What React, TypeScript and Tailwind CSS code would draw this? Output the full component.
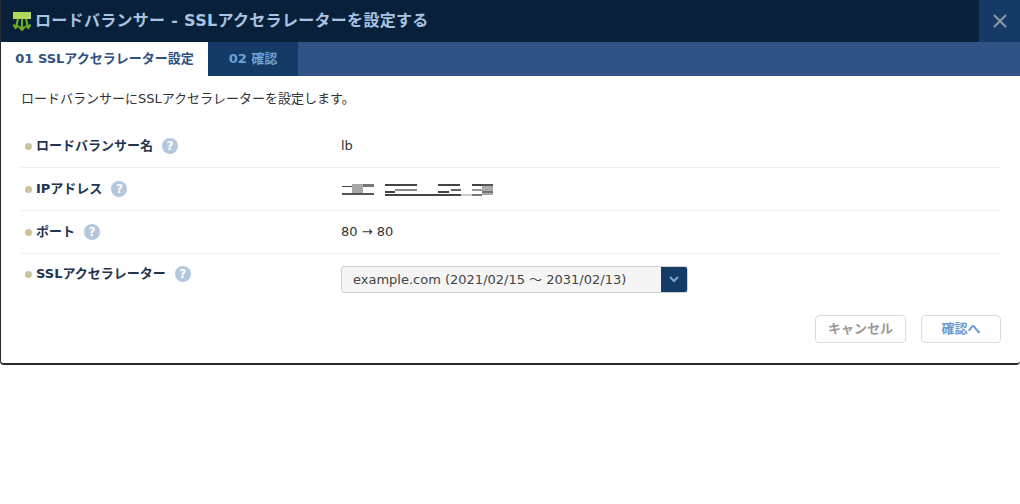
const fontStack = '"DejaVu Sans", "Noto Sans CJK JP", sans-serif';

function HelpIcon() {
  return (
    <span className="ml-[9px] flex h-[16px] w-[16px] items-center justify-center rounded-full bg-[#b4c7dd] text-[12px] font-bold leading-none text-white">
      ?
    </span>
  );
}

function LoadBalancerIcon() {
  return (
    <svg width="20" height="22" viewBox="0 0 20 22" className="mr-[3px]">
      <rect x="1" y="2" width="18" height="7" fill="#b3d65c" />
      <g stroke="#6fae1e" strokeWidth="2" fill="none">
        <path d="M6 9L4 17" />
        <path d="M1.500 14.500L3.500 18l3-2.500" />
        <path d="M10 9v11" />
        <path d="M7 16.500l3 3.500 3-3.500" />
        <path d="M14 9l2 8" />
        <path d="M13.500 15.500l3 2.500 2-3.500" />
      </g>
    </svg>
  );
}

function MaskedAddress() {
  return (
    <svg width="156" height="15" viewBox="0 0 156 15" className="block">
      <rect x="1" y="4" width="10" height="1" fill="#444" />
      <rect x="11" y="2" width="11" height="11" fill="#a8a8a8" />
      <rect x="22" y="2" width="11" height="3" fill="#777" />
      <rect x="1" y="11" width="32" height="2" fill="#555" />
      <rect x="44" y="2" width="32" height="2" fill="#444" />
      <rect x="54" y="7" width="22" height="2" fill="#888" />
      <rect x="44" y="9" width="10" height="2" fill="#444" />
      <rect x="44" y="12" width="76" height="2" fill="#444" />
      <rect x="97" y="2" width="22" height="2" fill="#444" />
      <rect x="110" y="7" width="10" height="2" fill="#666" />
      <rect x="97" y="9" width="11" height="2" fill="#444" />
      <rect x="120" y="12" width="11" height="2" fill="#ccc" />
      <rect x="131" y="2" width="10" height="2" fill="#444" />
      <rect x="131" y="7" width="10" height="2" fill="#999" />
      <rect x="131" y="12" width="10" height="2" fill="#777" />
      <rect x="141" y="3" width="11" height="10" fill="#aaa" />
      <rect x="141" y="2" width="11" height="2" fill="#555" />
      <rect x="141" y="9" width="11" height="2" fill="#777" />
    </svg>
  );
}

type RowProps = {
  label: string;
  children: React.ReactNode;
};

function RowLabel({ label }: { label: string }) {
  return (
    <div className="flex w-[320px] items-center pl-[4px]">
      <span className="mr-[4px] h-[7px] w-[7px] rounded-full bg-[#cdc39b]" />
      <span className="text-[13px] font-bold text-[#22344f]">{label}</span>
      <HelpIcon />
    </div>
  );
}

function Row({ label, children }: RowProps) {
  return (
    <div className="flex h-[43px] items-center border-b border-[#edf1f5]">
      <RowLabel label={label} />
      <div className="text-[13px] text-[#333]">{children}</div>
    </div>
  );
}

export default function App() {
  return (
    <div className="h-[504px] w-[1020px] overflow-hidden bg-white" style={{ fontFamily: fontStack }}>
      <div className="flex h-[365px] flex-col overflow-hidden rounded-b-[4px] border-b-2 border-l border-[#262b30] bg-white">
        <header className="-ml-px flex h-[42px] shrink-0 bg-[#082039]">
          <div className="flex flex-1 items-center pl-[12px]">
            <LoadBalancerIcon />
            <h1 className="text-[16px] font-bold tracking-[0.3px] text-[#a9c3e2]">
              ロードバランサー - SSLアクセラレーターを設定する
            </h1>
          </div>
          <button className="flex w-[41px] items-center justify-center bg-[#143a66]">
            <svg width="14" height="14" viewBox="0 0 14 14">
              <path d="M1 1l12 12M13 1L1 13" stroke="#8f98a3" strokeWidth="2" fill="none" />
            </svg>
          </button>
        </header>

        <nav className="flex h-[34px] shrink-0 bg-[#315284] text-[13px] font-bold">
          <div className="flex w-[207px] items-center justify-center bg-white text-[#2f5282]">
            01 SSLアクセラレーター設定
          </div>
          <div className="flex w-[90px] items-center justify-center bg-[#143a66] text-[#6fa1d6]">
            02 確認
          </div>
        </nav>

        <main className="flex flex-1 flex-col pl-[20px] pr-[19px] pt-[13px]">
          <p className="text-[13px] leading-[20px] text-[#333]">
            ロードバランサーにSSLアクセラレーターを設定します。
          </p>

          <div className="mt-[16px]">
            <Row label="ロードバランサー名">lb</Row>
            <Row label="IPアドレス">
              <MaskedAddress />
            </Row>
            <Row label="ポート">80 → 80</Row>
            <div className="flex items-start pt-[12px]">
              <div className="-mt-[2px] flex h-[20px] items-center">
                <RowLabel label="SSLアクセラレーター" />
              </div>
              <div className="flex h-[27px] w-[347px] overflow-hidden rounded-[3px] border border-[#cfcfcf] bg-[#f5f5f5]">
                <span className="flex flex-1 items-center pl-[11px] text-[13px] text-[#444]">
                  example.com (2021/02/15 ～ 2031/02/13)
                </span>
                <span className="flex w-[26px] items-center justify-center bg-[#143a66]">
                  <svg width="10" height="7" viewBox="0 0 10 7">
                    <path d="M1 1l4 4 4-4" stroke="#7aa9d9" strokeWidth="2" fill="none" />
                  </svg>
                </span>
              </div>
            </div>
          </div>

          <div className="mt-[22px] flex justify-end gap-[15px]">
            <button className="h-[28px] w-[91px] rounded-[4px] border border-[#dcdcdc] bg-white text-[13px] font-bold text-[#999]">
              キャンセル
            </button>
            <button className="h-[28px] w-[80px] rounded-[4px] border border-[#dcdcdc] bg-white text-[13px] font-bold text-[#6a9ad0]">
              確認へ
            </button>
          </div>
        </main>
      </div>
    </div>
  );
}
